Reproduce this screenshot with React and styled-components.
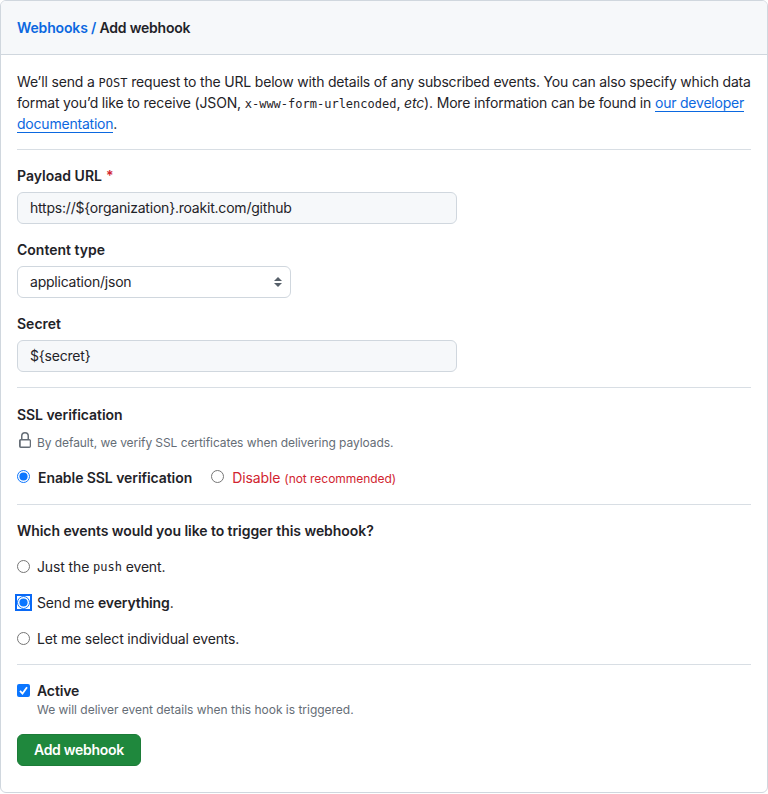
import React from "react";
import styled, { createGlobalStyle } from "styled-components";

const Global = createGlobalStyle`
  *, *::before, *::after { box-sizing: border-box; }
  body {
    margin: 0;
    background: #fff;
    color: #1f2328;
    font: 14px/21px Inter, "Liberation Sans", sans-serif;
  }
`;

const Frame = styled.main`
  width: 768px;
  height: 793px;
  border: 1px solid #d0d7de;
  border-radius: 6px;
  overflow: hidden;
`;

const Header = styled.header`
  display: flex;
  align-items: center;
  height: 54px;
  padding: 0 16px;
  background: #f6f8fa;
  border-bottom: 1px solid #d0d7de;
  font-weight: 600;
  white-space: pre;
`;

const Body = styled.div`
  padding: 16px 16px 0;
`;

const Section = styled.section`
  height: ${(p) => p.$height}px;
  padding-top: ${(p) => p.$top || 0}px;
  border-bottom: ${(p) => (p.$last ? "0" : "1px solid #d8dee4")};
`;

const Line = styled.div`
  height: 21px;
  white-space: pre;
`;

const Text = styled.span`
  letter-spacing: ${(p) => p.$track ?? -0.17}px;
  font-weight: ${(p) => (p.$bold ? 600 : "inherit")};
`;

const Small = styled(Text)`
  padding-top: 1px;
  font-size: 12px;
`;

const Crumb = styled(Text)`
  color: #0b68e0;
`;

const Link = styled.a`
  color: #0b68e0;
  border-bottom: 1px solid #0b68e0;
  letter-spacing: -0.21px;
`;

const Code = styled.code`
  font-family: "DejaVu Sans Mono", monospace;
  font-size: 12px;
  line-height: 1;
`;

const Field = styled.div`
  height: 74px;
`;

const Label = styled.div`
  display: flex;
  height: 27px;
  font-weight: 600;
  white-space: pre;
`;

const Required = styled.span`
  margin-left: 4px;
  color: #d1242f;
`;

const Control = styled.div`
  display: flex;
  align-items: center;
  justify-content: space-between;
  width: ${(p) => p.$width}px;
  height: 32px;
  padding: 0 8px 0 12px;
  line-height: 20px;
  border: 1px solid #d0d7de;
  border-radius: 6px;
  background: ${(p) => p.$fill || "#fff"};

  span {
    padding-bottom: 1px;
  }
`;

const Note = styled.div`
  display: flex;
  align-items: center;
  height: 20px;
  margin-top: 7px;
  color: #656d76;
  font-size: 12px;
  white-space: pre;
`;

const Choice = styled.label`
  display: flex;
  align-items: center;
  height: 21px;
  white-space: pre;
  color: ${(p) => (p.$danger ? "#d1242f" : "inherit")};
`;

const Mark = styled.svg`
  flex: none;
  display: block;
  overflow: visible;
  width: 13px;
  height: 13px;
  margin-right: ${(p) => p.$gap || 7}px;
  margin-bottom: ${(p) => p.$lift || 0}px;
`;

const Inline = styled.div`
  display: flex;
  gap: 19px;
  margin-top: 15px;
`;

const Stack = styled.div`
  display: flex;
  flex-direction: column;
  gap: 15px;
  margin-top: 15px;
`;

const Hint = styled(Note)`
  margin-top: 0;
  padding-left: 20px;
  height: 17px;
`;

const Button = styled.button`
  display: flex;
  align-items: center;
  justify-content: center;
  width: 124px;
  height: 32px;
  margin-top: 16px;
  padding: 0;
  border: 1px solid #1c7c38;
  border-radius: 6px;
  background: #1f883d;
  color: #fff;
  font: 600 14px/20px Inter, sans-serif;
`;

const Lock = styled.svg`
  width: 16px;
  height: 16px;
  margin: 0 4px 4px 0;
  fill: #656d76;
`;

function Radio({ checked, focused, gap, lift }) {
  return (
    <Mark viewBox="0 0 13 13" $gap={gap} $lift={lift}>
      {focused && <rect x="-2" y="-2" width="17" height="17" fill="#0969f6" />}
      {focused && <rect width="13" height="13" fill="#fff" />}
      <circle cx="6.5" cy="6.5" r="6" fill="#fff" stroke={checked ? "#0b76ff" : "#767676"} />
      {checked && <circle cx="6.5" cy="6.5" r="4.1" fill="#0b76ff" />}
    </Mark>
  );
}

export default function App() {
  return (
    <>
      <Global />
      <Frame>
        <Header>
          <Crumb $track={-0.15}>Webhooks / </Crumb>
          <Text $track={-0.22}>Add webhook</Text>
        </Header>
        <Body>
          <Section $height={79}>
            <Line>
              <Text $track={-0.14}>We’ll send a </Text>
              <Code>POST</Code>
              <Text $track={-0.19}> request to the URL below with details of any subscribed events. You can also specify which data</Text>
            </Line>
            <Line>
              <Text>format you’d like to receive (JSON, </Text>
              <Code>x-www-form-urlencoded</Code>
              <Text>, <em>etc</em>). More information can be found in </Text>
              <Link>our developer</Link>
            </Line>
            <Line>
              <Link>documentation</Link>.
            </Line>
          </Section>
          <Section $height={238} $top={15}>
            <Field>
              <Label><Text $track={0}>Payload URL</Text><Required>*</Required></Label>
              <Control $width={440} $fill="#f6f8fa"><Text $track={-0.21}>{"https://${organization}.roakit.com/github"}</Text></Control>
            </Field>
            <Field>
              <Label><Text $track={0}>Content type</Text></Label>
              <Control $width={274}>
                <Text $track={-0.22}>application/json</Text>
                <svg width="8" height="10" viewBox="0 0 8 10" fill="#57606a">
                  <path d="M4 0 8 4H0zM4 10 0 6h8z" />
                </svg>
              </Control>
            </Field>
            <Field>
              <Label><Text $track={0}>Secret</Text></Label>
              <Control $width={440} $fill="#f6f8fa"><Text $track={-0.2}>{"${secret}"}</Text></Control>
            </Field>
          </Section>
          <Section $height={117} $top={16}>
            <Line><Text $bold $track={-0.06}>SSL verification</Text></Line>
            <Note>
              <Lock viewBox="0 0 16 16">
                <path d="M4 7V4a4 4 0 1 1 8 0v3h.25c.966 0 1.75.784 1.75 1.75v5.5A1.75 1.75 0 0 1 12.25 16h-8.5A1.75 1.75 0 0 1 2 14.25v-5.5C2 7.784 2.784 7 3.75 7Zm-.25 1.75v5.5c0 .138.112.25.25.25h8.5a.25.25 0 0 0 .25-.25v-5.5a.25.25 0 0 0-.25-.25h-8.5a.25.25 0 0 0-.25.25ZM10.5 7V4a2.5 2.5 0 0 0-5 0v3Z" />
              </Lock>
              <Text $track={-0.07}>By default, we verify SSL certificates when delivering payloads.</Text>
            </Note>
            <Inline>
              <Choice><Radio checked gap={8} lift={3} /><Text $bold $track={-0.07}>Enable SSL verification</Text></Choice>
              <Choice $danger><Radio gap={8} lift={3} /><Text $track={-0.08}>Disable </Text><Small $track={-0.04}>(not recommended)</Small></Choice>
            </Inline>
          </Section>
          <Section $height={160} $top={15}>
            <Line><Text $bold $track={-0.06}>Which events would you like to trigger this webhook?</Text></Line>
            <Stack>
              <Choice><Radio /><Text $track={-0.12}>Just the </Text><Code>push</Code><Text> event.</Text></Choice>
              <Choice><Radio checked focused /><Text>Send me </Text><Text $bold $track={-0.13}>everything</Text>.</Choice>
              <Choice><Radio /><Text $track={-0.16}>Let me select individual events.</Text></Choice>
            </Stack>
          </Section>
          <Section $last $height={128} $top={15}>
            <Choice>
              <Mark viewBox="0 0 13 13">
                <rect width="13" height="13" rx="2" fill="#0b76ff" />
                <path d="M3 6.8 5.5 9.5 10 3.3" fill="none" stroke="#fff" strokeWidth="1.8" />
              </Mark>
              <Text $bold $track={-0.12}>Active</Text>
            </Choice>
            <Hint><Text $track={-0.02}>We will deliver event details when this hook is triggered.</Text></Hint>
            <Button><Text $track={-0.27}>Add webhook</Text></Button>
          </Section>
        </Body>
      </Frame>
    </>
  );
}
